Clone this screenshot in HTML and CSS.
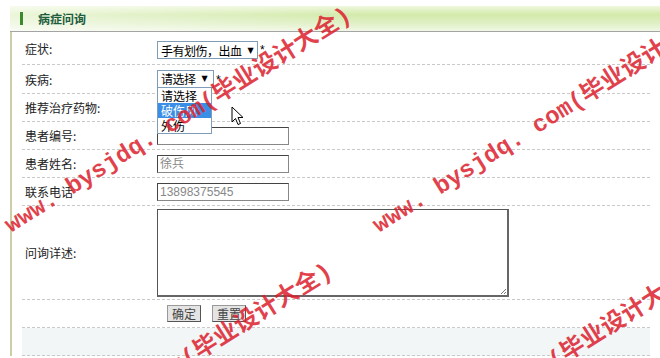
FILE: index.html
```html
<!DOCTYPE html>
<html lang="zh">
<head>
<meta charset="utf-8">
<title>病症问询</title>
<link rel="stylesheet" href="styles.css">
</head>
<body>
<div class="panel">
  <div class="panel-head">
    <span class="tick"></span>
    <span class="title">病症问询</span>
  </div>
  <div class="panel-body">
    <div class="row r1">
      <div class="label">症状:</div>
      <div class="field">
        <div class="select s1"><span class="val">手有划伤，出血</span><span class="arr">▼</span></div><span class="star">*</span>
      </div>
    </div>
    <div class="row r2">
      <div class="label">疾病:</div>
      <div class="field">
        <div class="select s2"><span class="val">请选择</span><span class="arr">▼</span></div><span class="star">*</span>
        <div class="dropdown">
          <div class="opt">请选择</div>
          <div class="opt on">破伤风</div>
          <div class="opt">外伤</div>
        </div>
      </div>
    </div>
    <div class="row">
      <div class="label">推荐治疗药物:</div>
      <div class="field"></div>
    </div>
    <div class="row">
      <div class="label">患者编号:</div>
      <div class="field"><div class="input"></div></div>
    </div>
    <div class="row">
      <div class="label">患者姓名:</div>
      <div class="field"><div class="input">徐兵</div></div>
    </div>
    <div class="row">
      <div class="label">联系电话</div>
      <div class="field"><div class="input">13898375545</div></div>
    </div>
    <div class="row r7">
      <div class="label">问询详述:</div>
      <div class="field"><div class="textarea"><svg class="grip" width="7" height="7" viewBox="0 0 7 7"><path d="M6 1L1 6M6 4L4 6" stroke="#777" stroke-width="1"/></svg></div></div>
    </div>
    <div class="row r8">
      <div class="label"></div>
      <div class="field btns"><span class="btn">确定</span><span class="btn">重置</span></div>
    </div>
    <div class="row r9"></div>
  </div>
</div>

<svg class="cursor" width="13" height="20" viewBox="0 0 13 20"><path d="M1 1 L1 16 L4.5 12.5 L7 18.5 L9.5 17.5 L7 11.5 L12 11.5 Z" fill="#fff" stroke="#000" stroke-width="1" stroke-linejoin="miter"/></svg>

<div class="wm-layer">
  <div class="wm w1">www. bysjdq. com(毕业设计大全)</div>
  <div class="wm w2">www. bysjdq. com(毕业设计大全)</div>
  <div class="wm w3">www. bysjdq. com(毕业设计大全)</div>
  <div class="wm w4">www. bysjdq. com(毕业设计大全)</div>
</div>
</body>
</html>
```
FILE: styles.css
```css
html, body {
  margin: 0;
  padding: 0;
  background: #fff;
  width: 660px;
  height: 358px;
  overflow: hidden;
  font-family: "Noto Sans CJK SC", "Liberation Sans", sans-serif;
  font-size: 12px;
  color: #222;
}
body { position: relative; }

.panel {
  margin: 6px 0 0 10px;
}
.panel-head {
  height: 25px;
  display: flex;
  align-items: center;
  border-bottom: 1px solid #a4a4a4;
  background:
    linear-gradient(to right, rgba(255,255,255,0.55), rgba(255,255,255,0) 55%),
    linear-gradient(to bottom, #eef7dd 0%, #d3eaaa 35%, #e0f0c6 70%, #f1f8e6 100%);
}
.tick {
  width: 3px;
  height: 13px;
  background: #3d8a2e;
  margin-left: 10px;
}
.title {
  margin-left: 15px;
  font-weight: bold;
  color: #1d5c3e;
  font-size: 12px;
}

.panel-body {
  border-left: 2px solid #cdcea6;
  padding: 0 10px;
}
.row {
  display: flex;
  align-items: center;
  height: 27px;
  border-bottom: 1px dashed #c9c9c9;
}
.r1 { height: 32px; }
.r2 { height: 28px; }
.r7 { height: 93px; }
.r9 { height: 27px; background: #f3f6f6; }

.label {
  width: 132px;
  padding-left: 3px;
  flex: none;
  color: #222;
}
.field {
  position: relative;
  display: flex;
  align-items: center;
}
.select {
  display: flex;
  align-items: center;
  box-sizing: border-box;
  height: 18px;
  border: 1px solid #7f9db9;
  padding: 0 0 0 3px;
  font-size: 12px;
  color: #000;
  background: #fff;
}
.val { letter-spacing: -0.5px; }
.s1 { width: 101px; margin-top: 4px; }
.s2 { width: 57px; margin-top: -1px; }
.arr { font-size: 8px; font-family: "DejaVu Sans", sans-serif; margin-left: 6px; }
.star { margin-left: 2px; font-family: "Liberation Sans", sans-serif; color: #000; margin-top: 4px; }
.r2 .star { margin-top: 2px; }

.dropdown {
  position: absolute;
  left: 0;
  top: 16px;
  width: 55px;
  box-sizing: border-box;
  border: 1px solid #7f9db9;
  background: #fff;
  z-index: 2;
}
.opt {
  height: 15px;
  line-height: 15px;
  padding-left: 3px;
  color: #000;
}
.opt.on { background: #3a8ee6; color: #fff; }

.input {
  box-sizing: border-box;
  width: 132px;
  height: 18px;
  border: 1px solid #444;
  border-right-color: #888;
  border-bottom-color: #888;
  padding-left: 2px;
  line-height: 16px;
  color: #888;
  font-family: "Liberation Sans", "Noto Sans CJK SC", sans-serif;
  font-size: 12px;
}
.textarea {
  position: relative;
  box-sizing: border-box;
  width: 352px;
  height: 88px;
  border: 1px solid #555;
  border-right: 2px solid #666;
  border-bottom: 2px solid #666;
  background: #fff;
}
.grip { position: absolute; right: 0; bottom: 0; }

.btns { padding-left: 10px; gap: 11px; }
.btn {
  box-sizing: border-box;
  height: 17px;
  padding: 0 4px;
  line-height: 15px;
  border: 1px solid #555;
  border-left-color: #999;
  border-top-color: #999;
  background: #e4e4e4;
  color: #444;
  font-size: 12px;
}

.cursor {
  position: absolute;
  left: 231px;
  top: 106px;
  z-index: 3;
}

.wm-layer {
  position: absolute;
  left: 0;
  top: 0;
  width: 660px;
  height: 358px;
  overflow: hidden;
  pointer-events: none;
  z-index: 5;
}
.wm {
  position: absolute;
  white-space: nowrap;
  font-family: "Liberation Mono", "Noto Sans CJK SC", monospace;
  font-weight: bold;
  font-size: 24px;
  line-height: 1;
  color: rgba(220, 30, 45, 0.85);
  transform-origin: 0 100%;
  transform: rotate(-32deg);
}
.w1 { left: 14px; top: 214px; }
.w2 { left: 382px; top: 214px; }
.w3 { left: -5px; top: 470px; }
.w4 { left: 362px; top: 472px; }
```
